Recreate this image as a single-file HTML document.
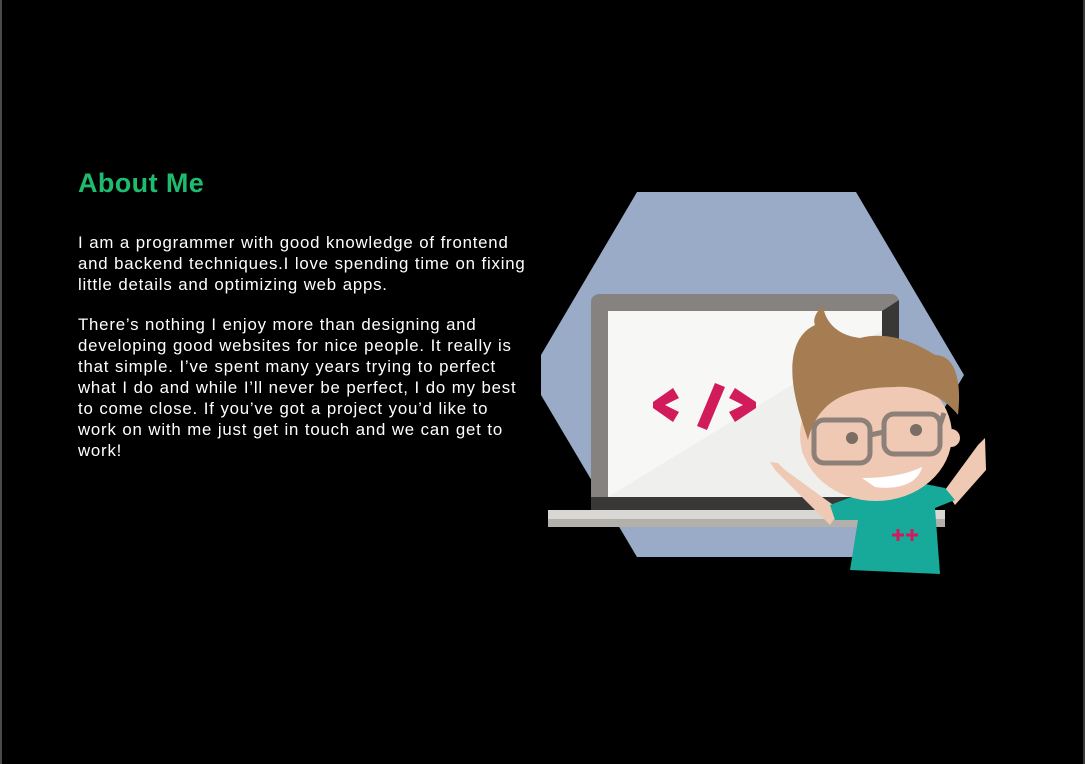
<!DOCTYPE html>
<html><head><meta charset="utf-8"><style>
html,body{margin:0;padding:0;background:#000;width:1085px;height:764px;overflow:hidden;position:relative;font-family:"Liberation Sans",sans-serif}
.bl{position:absolute;left:0;top:0;width:2px;height:764px;background:#4a4a4a}
.br{position:absolute;right:0;top:0;width:2px;height:764px;background:#3a3a3a}
h1{position:absolute;left:78px;top:168px;margin:0;font-size:27px;font-weight:bold;color:#1dbd6d;letter-spacing:0.4px}
.t{position:absolute;left:78px;color:#fff;font-size:16.8px;line-height:21px;white-space:nowrap;letter-spacing:0.8px;word-spacing:0.3px}
svg{position:absolute;left:0;top:0}
</style></head><body>
<div class="bl"></div><div class="br"></div>
<h1>About Me</h1>
<div class="t" style="top:232px">I am a programmer with good knowledge of frontend<br>and backend techniques.I love spending time on fixing<br>little details and optimizing web apps.</div>
<div class="t" style="top:314px">There’s nothing I enjoy more than designing and<br>developing good websites for nice people. It really is<br>that simple. I’ve spent many years trying to perfect<br>what I do and while I’ll never be perfect, I do my best<br>to come close. If you’ve got a project you’d like to<br>work on with me just get in touch and we can get to<br>work!</div>
<svg width="1085" height="764" viewBox="0 0 1085 764">
<polygon points="637,192 856,192 964,375 856,557 637,557 541,395 541,355" fill="#9aabc8"/>
<rect x="591" y="294" width="308" height="216" rx="8" fill="#858280"/>
<rect x="608" y="311" width="274" height="186" fill="#f7f7f5"/>
<polygon points="608,497 882,330 882,497" fill="#efefed"/>
<polygon points="882,311 899,300 899,510 882,497" fill="#3a3836"/>
<rect x="591" y="497" width="308" height="13" fill="#3a3836"/>
<rect x="548" y="510" width="397" height="9" fill="#d9d7d3"/>
<rect x="548" y="519" width="397" height="8" fill="#b3b0ab"/>
<g fill="#d21b5b">
<polygon points="673,388 679,398 665,405 679,412 673,422 653,408 653,402"/>
<polygon points="715,383 725,387 707,430 697,426"/>
<polygon points="735,388 756,402 756,408 735,422 729,412 743,405 729,398"/>
</g>
<path d="M775,470 L770,462 L778,463 L785,470 L840,510 L830,525 Z" fill="#efc9b3"/>
<path d="M945,490 L978,445 L985,438 L986,470 L955,505 Z" fill="#efc9b3"/>
<path d="M830,505 L870,490 L905,480 L945,488 L955,500 L935,508 L940,574 L850,570 L858,520 L835,520 Z" fill="#17a99a"/>
<g stroke="#d21b5b" stroke-width="3"><path d="M892,535h12M898,529v12M906,535h12M912,529v12"/></g>
<circle cx="811" cy="450" r="9" fill="#efc9b3"/>
<circle cx="951" cy="438" r="9" fill="#efc9b3"/>
<ellipse cx="876" cy="435" rx="76" ry="66" fill="#efc9b3"/>
<path d="M800,415 C785,365 793,335 815,325 C812,318 818,310 823,306 C825,320 835,335 860,338 C890,330 920,345 935,355 C955,355 962,380 958,415 C945,398 920,385 895,387 C860,388 820,392 808,440 Z" fill="#a67c52"/>
<g fill="none" stroke="#8d8078" stroke-width="5">
<rect x="814" y="420" width="56" height="43" rx="10"/>
<rect x="884" y="414" width="56" height="40" rx="10"/>
<path d="M870,435 L884,432 M940,425 L944,413"/>
</g>
<circle cx="852" cy="438" r="6" fill="#7a6d66"/><circle cx="916" cy="430" r="6" fill="#7a6d66"/>
<path d="M862,478 C890,478 910,473 922,467 C918,485 895,490 875,487 Z" fill="#fff"/>
</svg>
</body></html>
